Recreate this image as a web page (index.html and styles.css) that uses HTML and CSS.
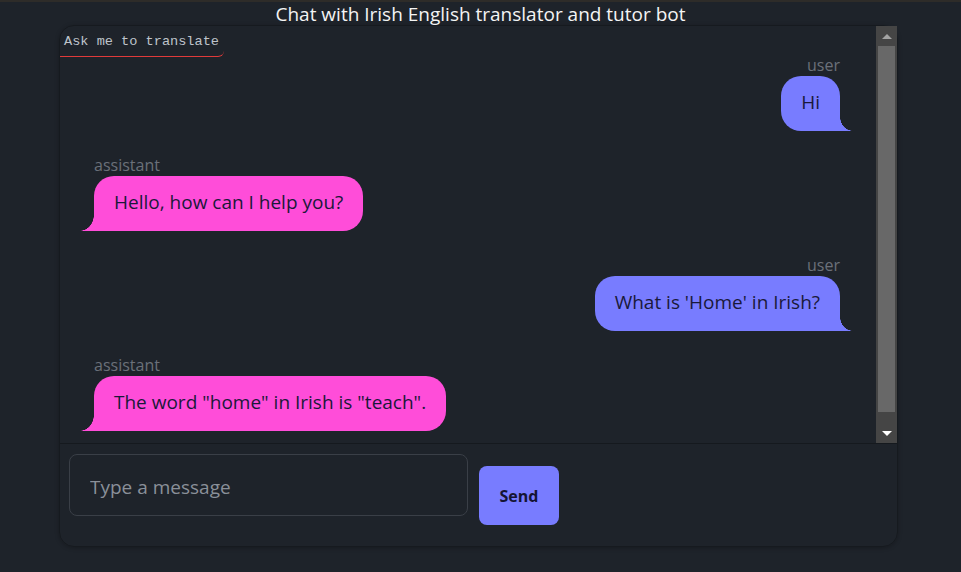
FILE: index.html
```html
<!DOCTYPE html>
<html lang="en">
<head>
<meta charset="utf-8">
<title>Chat with Irish English translator and tutor bot</title>
<link rel="stylesheet" href="styles.css">
</head>
<body>
<div class="topbar"></div>
<h1 class="title">Chat with Irish English translator and tutor bot</h1>
<div class="chat">
  <div class="chat-body">
    <div class="msg-list">
      <div class="tag">Ask me to translate</div>
      <div class="msg user">
        <div class="label">user</div>
        <div class="bubble">Hi</div>
      </div>
      <div class="msg assistant">
        <div class="label">assistant</div>
        <div class="bubble">Hello, how can I help you?</div>
      </div>
      <div class="msg user">
        <div class="label">user</div>
        <div class="bubble">What is 'Home' in Irish?</div>
      </div>
      <div class="msg assistant">
        <div class="label">assistant</div>
        <div class="bubble">The word "home" in Irish is "teach".</div>
      </div>
    </div>
    <div class="scrollbar">
      <div class="sb-btn"><span class="arrow-up"></span></div>
      <div class="sb-track"><div class="sb-thumb"></div></div>
      <div class="sb-btn"><span class="arrow-down"></span></div>
    </div>
  </div>
  <div class="composer">
    <input class="input" type="text" placeholder="Type a message">
    <button class="send">Send</button>
  </div>
</div>
</body>
</html>
```
FILE: styles.css
```css
html, body {
  margin: 0;
  padding: 0;
}
body {
  background: #1e232a;
  font-family: "Open Sans", "Noto Sans", sans-serif;
  color: #f2f2f2;
  height: 572px;
  overflow: hidden;
}
.topbar {
  height: 2px;
  background: #2e2c29;
}
.title {
  margin: 0;
  height: 23px;
  line-height: 24px;
  font-size: 19px;
  font-weight: 400;
  text-align: center;
  color: #f4f4f4;
}
.chat {
  margin-left: 59px;
  width: 837px;
  height: 520px;
  border: 1px solid #161a1f;
  border-radius: 15px;
  box-shadow: 0 1px 4px rgba(0,0,0,0.25);
  display: flex;
  flex-direction: column;
}
.chat-body {
  height: 417px;
  display: flex;
  border-bottom: 1px solid #15191e;
}
.msg-list {
  flex: 1;
  overflow: hidden;
  padding: 0 36px 0 0;
  display: flex;
  flex-direction: column;
}
.tag {
  align-self: flex-start;
  font-family: "Liberation Mono", "DejaVu Sans Mono", monospace;
  font-size: 13.6px;
  line-height: 16px;
  color: #bfc3ca;
  padding: 8px 4px 6px 4px;
  border-bottom: 1px solid #e03a3a;
  border-bottom-right-radius: 6px;
  width: 156px;
}
.msg {
  display: flex;
  flex-direction: column;
  margin-top: 25px;
}
.tag + .msg {
  margin-top: -1px;
}
.msg.user {
  align-items: flex-end;
}
.msg.assistant {
  align-items: flex-start;
  padding-left: 34px;
}
.label {
  font-size: 16px;
  line-height: 19px;
  color: #6b7079;
  margin-bottom: 1px;
}
.bubble {
  position: relative;
  font-size: 19px;
  line-height: 26px;
  padding: 13px 20px 16px;
  color: #1a193a;
  border-radius: 20px;
}
.user .bubble {
  background: #787cff;
  border-bottom-right-radius: 0;
}
.assistant .bubble {
  background: #ff4dd9;
  border-bottom-left-radius: 0;
}
.user .bubble::after {
  content: "";
  position: absolute;
  right: -13px;
  bottom: 0;
  width: 13px;
  height: 14px;
  background: radial-gradient(ellipse 13px 14px at 100% 0, transparent 97%, #787cff 100%);
}
.assistant .bubble::after {
  content: "";
  position: absolute;
  left: -14px;
  bottom: 0;
  width: 14px;
  height: 16px;
  background: radial-gradient(ellipse 14px 16px at 0 0, transparent 97%, #ff4dd9 100%);
}
.scrollbar {
  width: 21px;
  background: #454545;
  display: flex;
  flex-direction: column;
}
.sb-btn {
  height: 20px;
  display: flex;
  align-items: center;
  justify-content: center;
}
.arrow-up {
  width: 0;
  height: 0;
  border-left: 5px solid transparent;
  border-right: 5px solid transparent;
  border-bottom: 5px solid #a3a3a3;
}
.arrow-down {
  width: 0;
  height: 0;
  border-left: 5px solid transparent;
  border-right: 5px solid transparent;
  border-top: 5px solid #ffffff;
}
.sb-track {
  flex: 1;
  padding: 0 2px;
}
.sb-thumb {
  height: 366px;
  background: #686868;
}
.composer {
  flex: 1;
  display: flex;
  align-items: center;
  padding: 10px 10px 10px 9px;
}
.input {
  align-self: flex-start;
  width: 399px;
  height: 62px;
  box-sizing: border-box;
  background: #1e232a;
  border: 1px solid #3a3f47;
  border-radius: 8px;
  padding: 3px 20px 0;
  font-family: "Open Sans", "Noto Sans", sans-serif;
  font-size: 19px;
  color: #e8e8e8;
  outline: none;
}
.input::placeholder {
  color: #8a9099;
}
.send {
  margin-left: 11px;
  width: 80px;
  height: 59px;
  border: none;
  border-radius: 8px;
  background: #787cff;
  color: #141433;
  font-family: "Open Sans", "Noto Sans", sans-serif;
  font-size: 16px;
  font-weight: 700;
  padding: 0;
  margin-top: 1px;
}
```
